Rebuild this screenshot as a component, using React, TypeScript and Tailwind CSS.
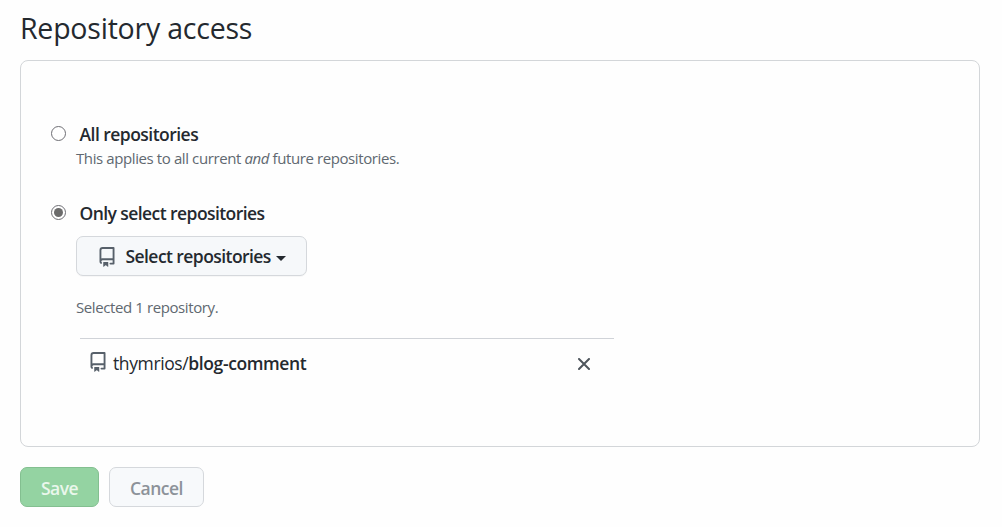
import type { ReactNode } from 'react';

function RepoIcon({ className }: { className?: string }) {
  return (
    <svg viewBox="0 0 16 16" width="20" height="20" fill="#57606a" className={className} aria-hidden="true">
      <path
        fillRule="evenodd"
        d="M2 2.5A2.5 2.5 0 014.5 0h8.75a.75.75 0 01.75.75v12.5a.75.75 0 01-.75.75h-2.5a.75.75 0 110-1.5h1.75v-2h-8a1 1 0 00-.714 1.7.75.75 0 01-1.072 1.05A2.495 2.495 0 012 11.5v-9zm10.5-1V9h-8c-.356 0-.694.074-1 .208V2.5a1 1 0 011-1h8zM5 12.25v3.25a.25.25 0 00.4.2l1.45-1.087a.25.25 0 01.3 0L8.6 15.7a.25.25 0 00.4-.2v-3.25a.25.25 0 00-.25-.25h-3.5a.25.25 0 00-.25.25z"
      />
    </svg>
  );
}

function Radio({ checked }: { checked?: boolean }) {
  return (
    <span
      role="radio"
      aria-checked={!!checked}
      className="flex size-[15px] shrink-0 items-center justify-center rounded-full border border-[#6e6e74] bg-white"
    >
      {checked && <span className="size-[9px] rounded-full bg-[#6b6b6b]" />}
    </span>
  );
}

function Option({ checked, className, children }: { checked?: boolean; className: string; children: ReactNode }) {
  return (
    <div className="flex h-[26px] items-center">
      <div className="-mt-0.5 flex">
        <Radio checked={checked} />
      </div>
      <span className={`ml-[13.5px] text-[17.5px] font-[560] ${className}`}>{children}</span>
    </div>
  );
}

export default function App() {
  return (
    <main className="h-[527px] overflow-hidden bg-[#fefefe] px-5 pt-2 font-['Open_Sans','Noto_Sans',sans-serif] whitespace-nowrap text-[#24292f]">
      <h1 className="h-[52px] text-[28.5px] leading-[41px] tracking-[-0.22px]">
        <span>Repository access</span>
      </h1>
      <section className="h-[387px] w-[960px] rounded-lg border border-[#d3d6d9] pt-[60px] pl-[30px]">
        <Option className="tracking-[-0.53px]">All repositories</Option>
        <p className="ml-[25px] h-[53px] text-[15px] leading-[22px] text-[#606870]">
          <span className="tracking-[-0.4px]">This applies to all current <em>and</em> future repositories.</span>
        </p>
        <Option checked className="tracking-[-0.57px]">Only select repositories</Option>
        <div className="pl-[25px]">
          <button className="mt-[10px] flex h-10 w-[231px] items-center rounded-[7px] border border-[#d5d8dc] bg-[#f6f8fa] pl-5 shadow-[0_1px_0_rgba(31,35,40,0.03)]">
            <RepoIcon className="mt-px" />
            <span className="ml-[8.5px] w-[146px] text-left text-[17.5px] font-[560] tracking-[-0.57px]">Select repositories</span>
            <span className="mt-[4px] ml-[4.5px] border-x-[5px] border-t-[5px] border-x-transparent border-t-[#24292f]" />
          </button>
          <p className="mt-[20px] h-[42px] text-[15px] leading-[22px] text-[#606870]">
            <span className="tracking-[-0.4px]">Selected 1 repository.</span>
          </p>
          <div className="ml-1 flex h-[51px] w-[534px] items-center border-t border-[#d0d3d8] pl-2">
            <RepoIcon className="-mt-1" />
            <span className="-mt-[2px] ml-[5px] text-[17.5px] tracking-[-0.39px]">
              thymrios/<b className="font-semibold">blog-comment</b>
            </span>
            <svg viewBox="0 0 12 12" width="12" height="12" className="mr-6 ml-auto" aria-label="Remove">
              <path d="M1 1 11 11M11 1 1 11" stroke="#4e555c" strokeWidth="2" strokeLinecap="round" />
            </svg>
          </div>
        </div>
      </section>
      <div className="mt-5 flex gap-[10px] text-[17.5px] font-[560]">
        <button className="h-10 w-[79px] rounded-[7px] border border-[#83bf90] bg-[#94d3a2] pt-[2px] text-[#eaf7ec]">
          <span className="tracking-[-0.5px]">Save</span>
        </button>
        <button className="h-10 w-[95px] rounded-[7px] border border-[#d5d8dc] bg-[#f7f9fb] pt-[2px] text-[#8c9299]">
          <span className="tracking-[-0.5px]">Cancel</span>
        </button>
      </div>
    </main>
  );
}
